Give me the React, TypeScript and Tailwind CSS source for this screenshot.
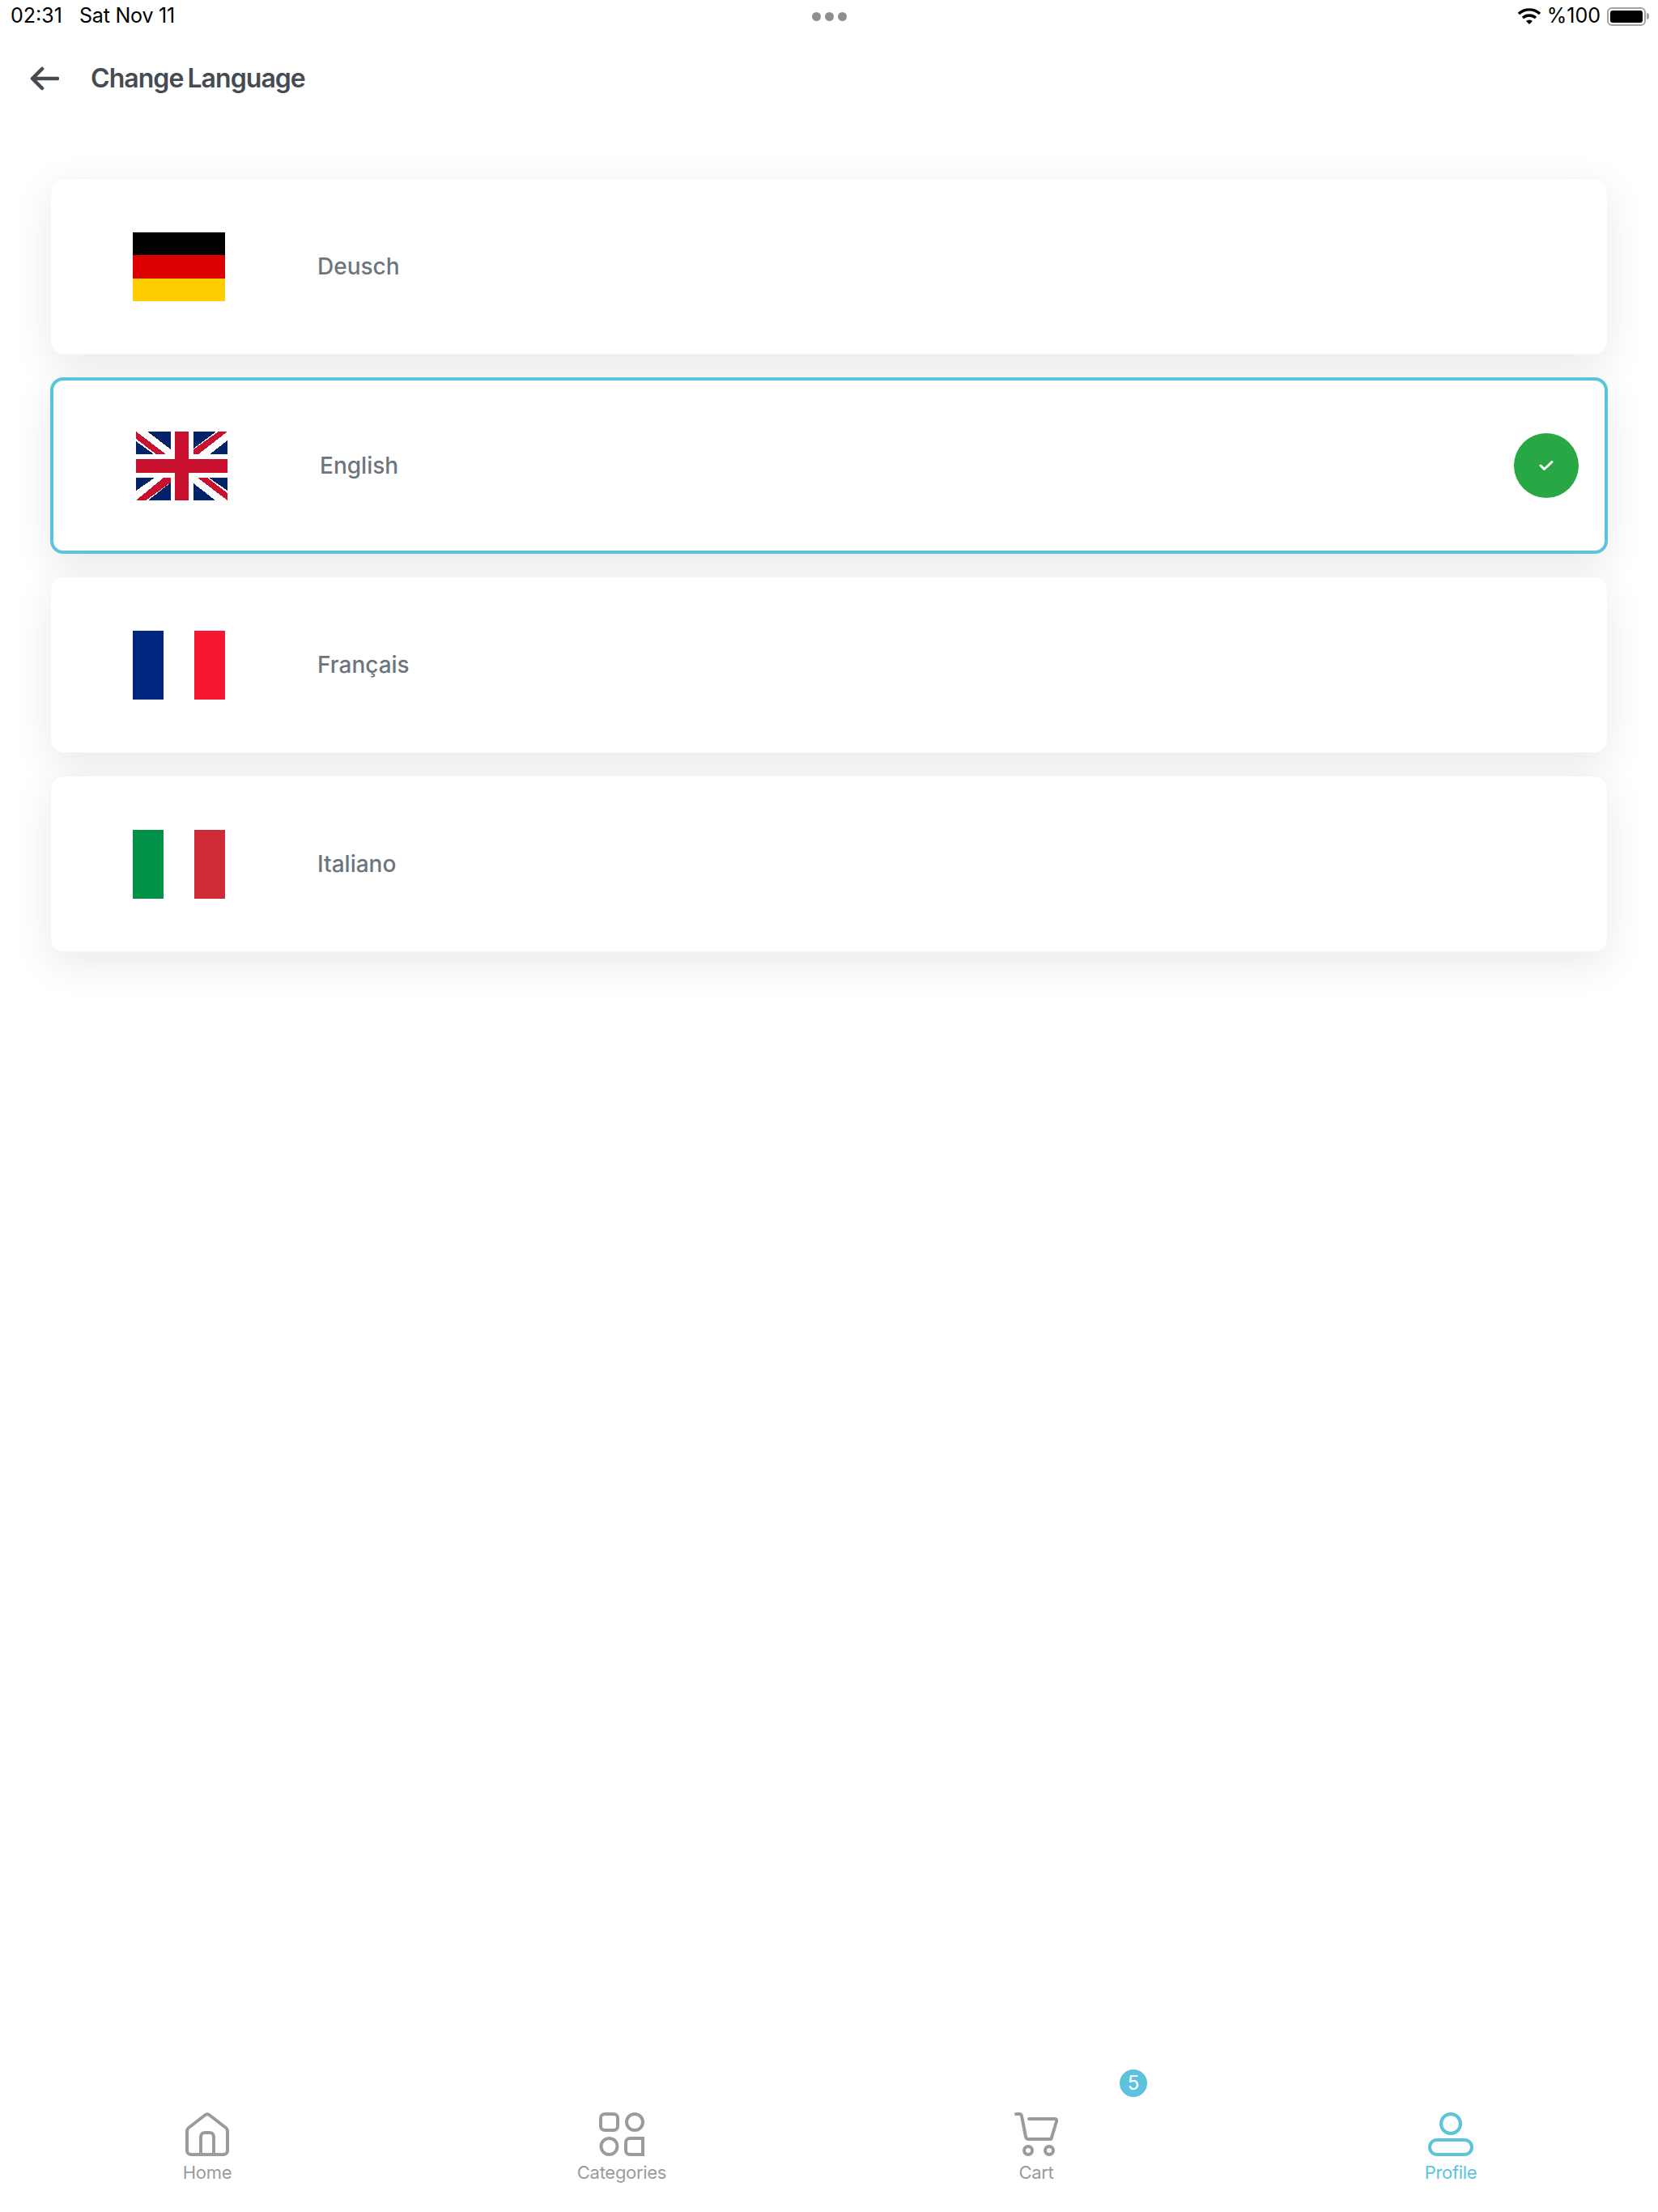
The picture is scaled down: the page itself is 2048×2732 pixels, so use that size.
const languages = [
  { name: 'Deusch', flag: 'de' },
  { name: 'English', flag: 'gb', selected: true },
  { name: 'Français', flag: 'fr' },
  { name: 'Italiano', flag: 'it' },
]

const Flag = ({ code }: { code: string }) => {
  if (code === 'gb') {
    return <svg width="113" height="85" viewBox="0 0 113 85" shapeRendering="crispEdges" className="shrink-0">
      <rect width="113" height="85" fill="#ffffff" />
      <g fill="#012169">
        <polygon points="14,0 43,0 43,22" />
        <polygon points="0,12 0,28 22,28" />
        <polygon points="71,0 99,0 71,21" />
        <polygon points="91,28 113,11 113,28" />
        <polygon points="0,57 23,57 0,73" />
        <polygon points="15,85 43,63 43,85" />
        <polygon points="90,57 113,57 113,73" />
        <polygon points="71,64 98,85 71,85" />
      </g>
      <g fill="#c8102e">
        <polygon points="0,0 37,28 25,28 0,9" />
        <polygon points="71,28 71,22 102,0 113,0 77,28" />
        <polygon points="34,57 43,57 43,63 12,85 0,85" />
        <polygon points="76,57 88,57 113,76 113,85" />
        <rect x="48" width="17" height="85" />
        <rect y="34" width="113" height="17" />
      </g>
    </svg>
  }
  if (code === 'de') {
    return <svg width="114" height="85" viewBox="0 0 114 85" shapeRendering="crispEdges" className="shrink-0">
      <rect width="114" height="28" fill="#000000" />
      <rect y="28" width="114" height="29" fill="#dd0000" />
      <rect y="57" width="114" height="28" fill="#ffce00" />
    </svg>
  }
  const left = code === 'fr' ? '#00267f' : '#009246'
  const right = code === 'fr' ? '#f7162f' : '#ce2b37'
  return <svg width="114" height="85" viewBox="0 0 114 85" shapeRendering="crispEdges" className="shrink-0">
    <rect width="38" height="85" fill={left} />
    <rect x="76" width="38" height="85" fill={right} />
  </svg>
}

const StatusBar = () => {
  return <div className="relative flex h-[40px] items-center justify-between pl-[13px] pr-[11px] text-[25px] text-black">
    <div className="flex">
      <span className="w-[85px]">02:31</span>
      <span className="tracking-[-0.2px]">Sat Nov 11</span>
    </div>
    <div className="absolute left-[1003px] top-[15px] flex gap-[5px]">
      <span className="h-[11px] w-[11px] rounded-full bg-[#8e8e8e]" />
      <span className="h-[11px] w-[11px] rounded-full bg-[#8e8e8e]" />
      <span className="h-[11px] w-[11px] rounded-full bg-[#8e8e8e]" />
    </div>
    <div className="flex items-center">
      <svg width="28" height="20" viewBox="0 0 28 20" className="mr-[8px]">
        <path d="M1 7 A19 19 0 0 1 27 7" fill="none" stroke="#000" strokeWidth="3.4" />
        <path d="M6 12 A12 12 0 0 1 22 12" fill="none" stroke="#000" strokeWidth="3.4" />
        <path d="M10 16 L14 20 L18 16 A6 6 0 0 0 10 16 Z" fill="#000" />
      </svg>
      <span className="mr-[8px]">%100</span>
      <div className="flex items-center">
        <div className="h-[23px] w-[48px] rounded-[6px] border-2 border-[#a3a3a3] p-[2px]">
          <div className="h-full w-full rounded-[3px] bg-black" />
        </div>
        <div className="ml-[1px] h-[8px] w-[3px] rounded-r-full bg-[#a3a3a3]" />
      </div>
    </div>
  </div>
}

const Header = () => {
  return <div className="flex h-[114px] items-center pl-[37px]">
    <svg width="36" height="30" viewBox="0 0 36 30" fill="none" stroke="#454b52" strokeWidth="4.5" strokeLinecap="round" strokeLinejoin="round">
      <path d="M34 15 H3 M15 3 L3 15 L15 27" />
    </svg>
    <h1 className="ml-[39px] text-[32px] font-semibold tracking-[-0.95px] text-[#454b52] [word-spacing:-2px]">Change Language</h1>
  </div>
}

const LanguageRow = (props: { name: string, flag: string, selected?: boolean }) => {
  const baseClass = "flex h-[218px] items-center rounded-[16px] bg-white shadow-[0_14px_50px_rgba(0,0,0,0.09)]"
  const normalClass = baseClass + " border border-[#f6f6f6] pl-[101px]"
  const activeClass = baseClass + " border-4 border-[#5bc3de] pl-[102px] pr-[32px]"

  return <div className={props.selected ? activeClass : normalClass}>
    <Flag code={props.flag} />
    <span className="ml-[114px] text-[28px] font-medium text-[#6c757d]">{props.name}</span>
    {props.selected && <div className="ml-auto flex h-[80px] w-[80px] items-center justify-center rounded-full bg-[#28a745]">
      <svg width="20" height="16" viewBox="0 0 20 16" fill="none" stroke="#fff" strokeWidth="3" strokeLinecap="round" strokeLinejoin="round">
        <path d="M3 8 L7.5 12.5 L17 3.5" />
      </svg>
    </div>}
  </div>
}

const HomeIcon = () => <svg width="54" height="54" viewBox="0 0 54 54" fill="none" stroke="#9b9b9b" strokeWidth="4" strokeLinejoin="round">
  <path d="M24 3.5 a4 4 0 0 1 6 0 L50 19 a5 5 0 0 1 2 4 V47 a5 5 0 0 1 -5 5 H7 a5 5 0 0 1 -5 -5 V23 a5 5 0 0 1 2 -4 Z" />
  <path d="M19 52 V30 a5 5 0 0 1 5 -5 h6 a5 5 0 0 1 5 5 V52" />
</svg>

const CategoriesIcon = () => <svg width="56" height="54" viewBox="0 0 56 54" fill="none" stroke="#9b9b9b" strokeWidth="4">
  <rect x="2" y="2" width="21" height="20" rx="5" />
  <circle cx="44" cy="12" r="10" />
  <circle cx="12.5" cy="42" r="10" />
  <path d="M38 32 H54 V52 H38 a5 5 0 0 1 -5 -5 V37 a5 5 0 0 1 5 -5 Z" />
</svg>

const CartIcon = () => <svg width="54" height="54" viewBox="0 0 54 54" fill="none" stroke="#9b9b9b" strokeWidth="4" strokeLinecap="round" strokeLinejoin="round">
  <path d="M2 2 H6 a3 3 0 0 1 3 2.5 L14 30 a4 4 0 0 0 4 3 H44 a2 2 0 0 0 2 -2 L52 11 a2 2 0 0 0 -2 -3 H18" />
  <circle cx="17" cy="47" r="5" />
  <circle cx="43" cy="47" r="5" />
</svg>

const ProfileIcon = () => <svg width="56" height="54" viewBox="0 0 56 54" fill="none" stroke="#5bc3de" strokeWidth="4">
  <circle cx="28" cy="14" r="12" />
  <rect x="2" y="34" width="52" height="18" rx="9" />
</svg>

const TabItem = (props: { label: string, active?: boolean, badge?: string, children: React.ReactNode }) => {
  return <div className="relative flex flex-col items-center">
    {props.badge && <span className="absolute left-[calc(50%+103px)] top-[-53px] flex h-[34px] w-[34px] items-center justify-center rounded-full bg-[#5bc3de] text-[24px] text-white">{props.badge}</span>}
    {props.children}
    <span className={props.active ? "mt-[5px] text-[22px] leading-[30px] tracking-[-0.3px] text-[#5bc3de]" : "mt-[5px] text-[22px] leading-[30px] tracking-[-0.3px] text-[#9b9b9b]"}>{props.label}</span>
  </div>
}

const TabBar = () => {
  return <div className="mt-auto grid h-[123px] grid-cols-4">
    <TabItem label="Home"><HomeIcon /></TabItem>
    <TabItem label="Categories"><CategoriesIcon /></TabItem>
    <TabItem label="Cart" badge="5"><CartIcon /></TabItem>
    <TabItem label="Profile" active><ProfileIcon /></TabItem>
  </div>
}

export default function App() {
  return <div className="flex h-[2732px] w-[2048px] flex-col bg-white font-['Inter',sans-serif]">
    <StatusBar />
    <Header />
    <div className="flex flex-col gap-[28px] px-[62px] pt-[66px]">
      {languages.map((language) => <LanguageRow key={language.name} {...language} />)}
    </div>
    <TabBar />
  </div>
}
